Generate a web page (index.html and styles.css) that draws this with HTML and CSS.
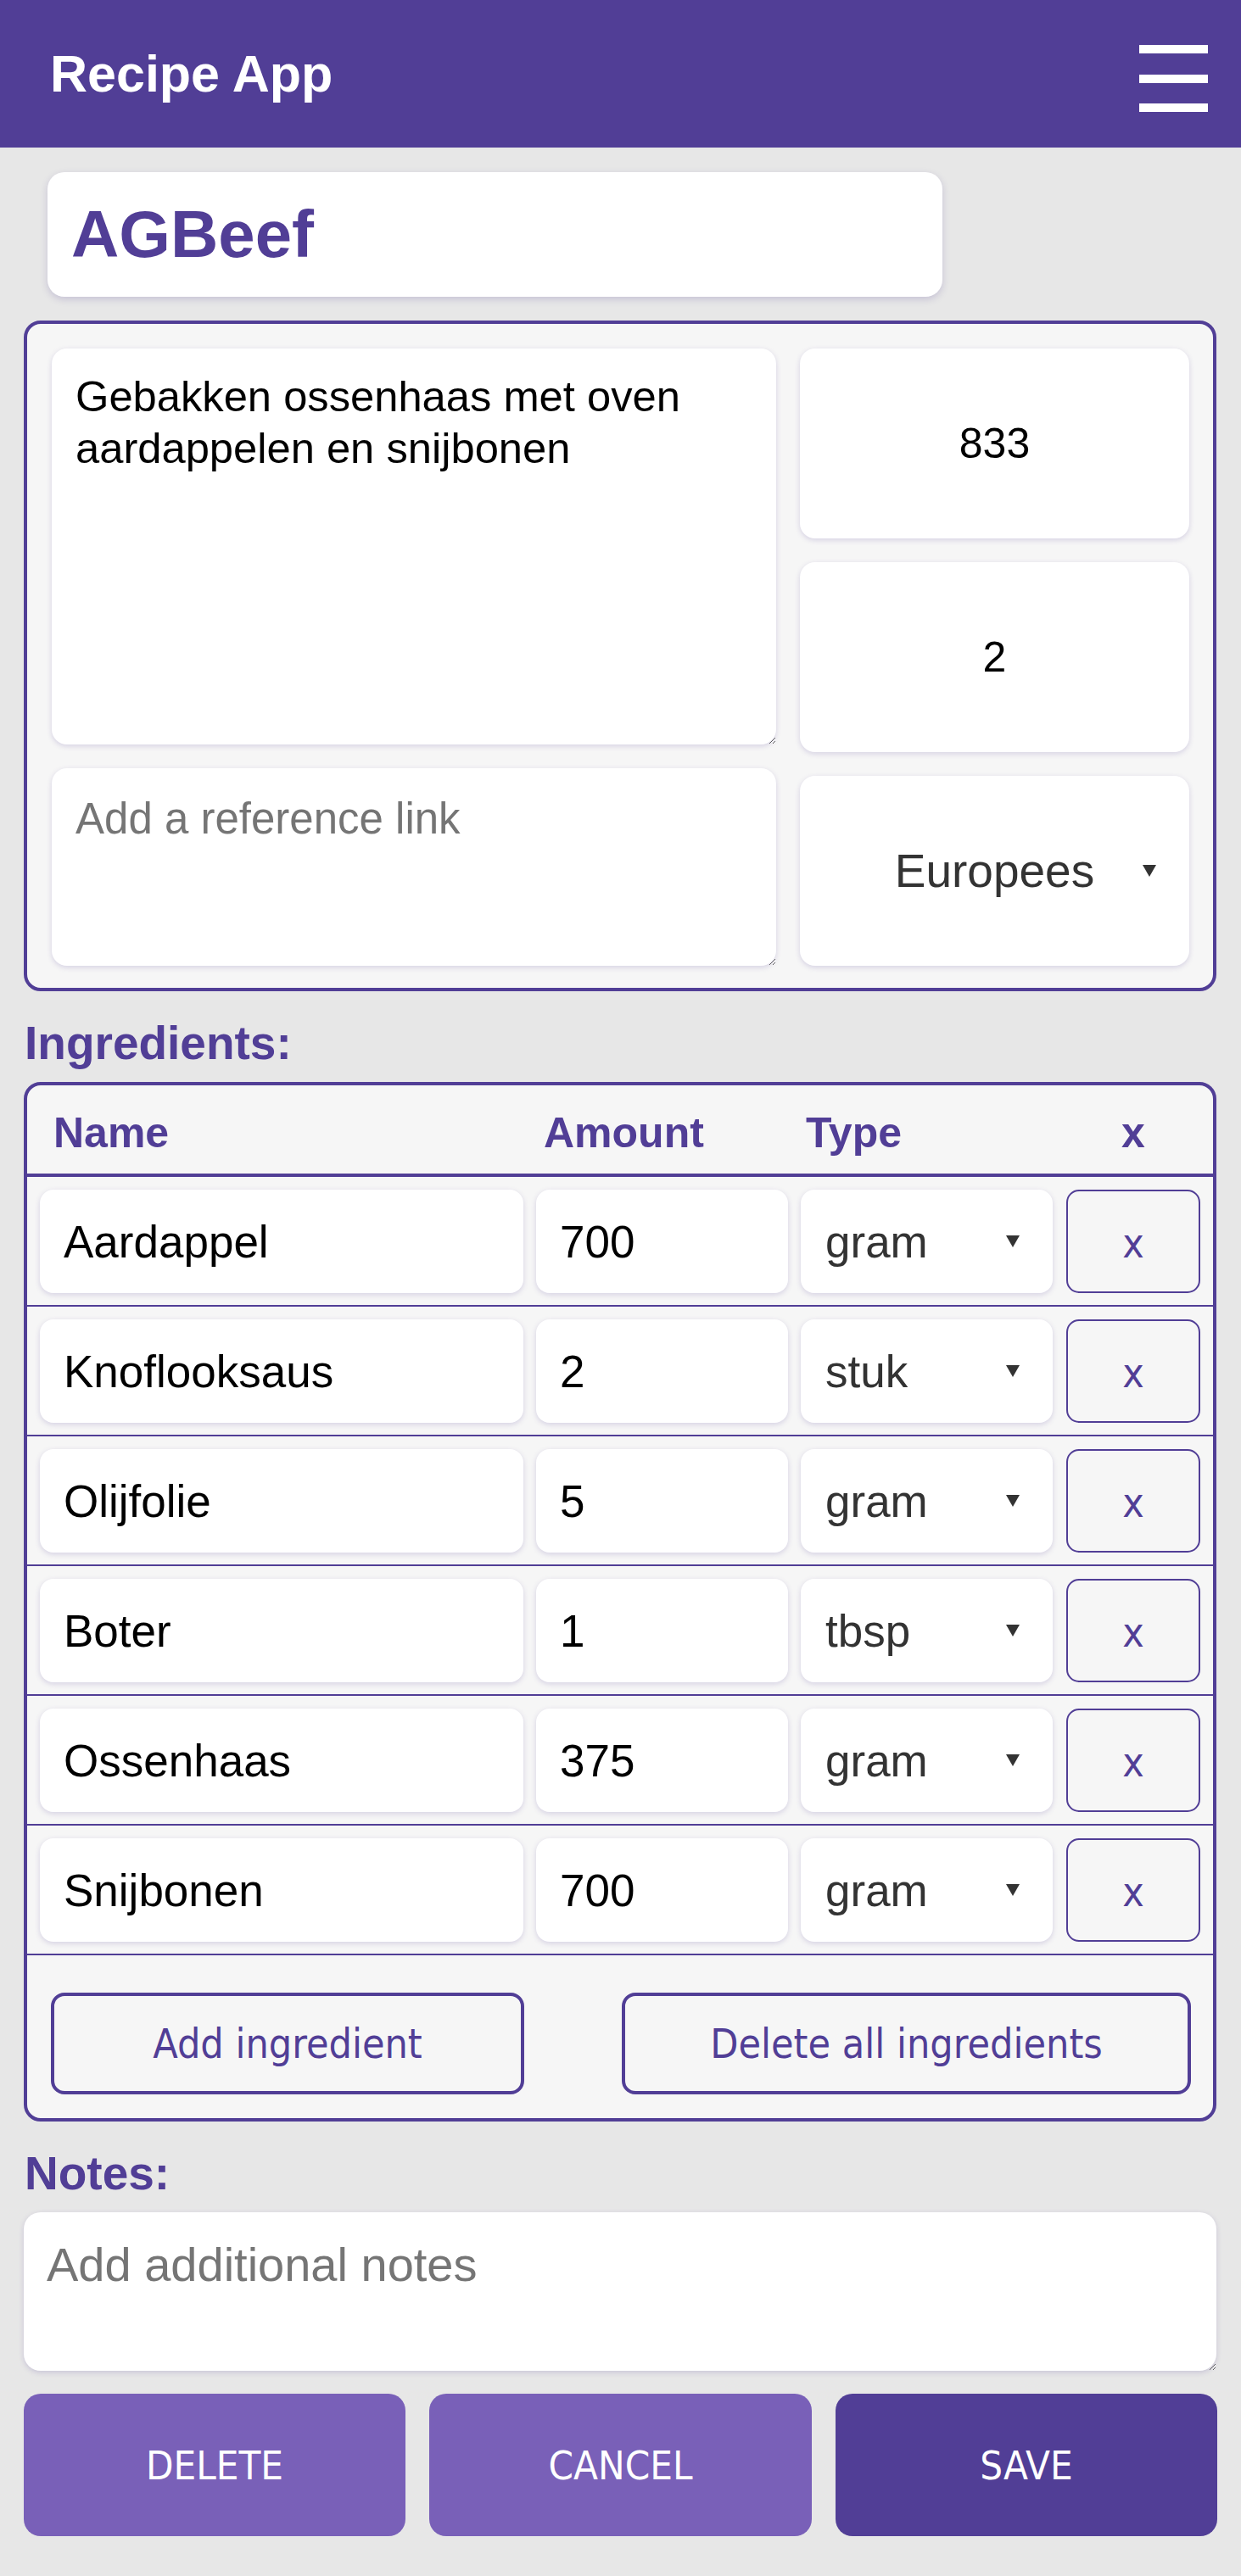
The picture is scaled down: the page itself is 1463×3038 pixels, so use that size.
FILE: index.html
```html
<!DOCTYPE html>
<html lang="nl">
<head>
<meta charset="utf-8">
<title>Recipe App</title>
<link rel="stylesheet" href="styles.css">
</head>
<body>
<header class="topbar">
  <h1 class="brand">Recipe App</h1>
  <button class="menu" aria-label="Menu"><span></span><span></span><span></span></button>
</header>
<main class="page">
  <div class="title-card">
    <input class="title-input" type="text" value="AGBeef">
  </div>

  <section class="details">
    <div class="col-left">
      <textarea class="field desc">Gebakken ossenhaas met oven aardappelen en snijbonen</textarea>
      <textarea class="field ref" placeholder="Add a reference link"></textarea>
    </div>
    <div class="col-right">
      <input class="field num" type="text" value="833">
      <input class="field num" type="text" value="2">
      <div class="select-wrap">
        <select class="field cuisine"><option>Europees</option></select>
      </div>
    </div>
  </section>

  <h2 class="label">Ingredients:</h2>
  <section class="ingredients">
    <div class="ing-head">
      <span class="h-name">Name</span>
      <span class="h-amount">Amount</span>
      <span class="h-type">Type</span>
      <span class="h-del">x</span>
    </div>
    <div class="ing-row">
      <input class="cell" type="text" value="Aardappel">
      <input class="cell" type="text" value="700">
      <div class="select-wrap"><select class="cell type"><option>gram</option></select></div>
      <button class="del">x</button>
    </div>
    <div class="ing-row">
      <input class="cell" type="text" value="Knoflooksaus">
      <input class="cell" type="text" value="2">
      <div class="select-wrap"><select class="cell type"><option>stuk</option></select></div>
      <button class="del">x</button>
    </div>
    <div class="ing-row">
      <input class="cell" type="text" value="Olijfolie">
      <input class="cell" type="text" value="5">
      <div class="select-wrap"><select class="cell type"><option>gram</option></select></div>
      <button class="del">x</button>
    </div>
    <div class="ing-row">
      <input class="cell" type="text" value="Boter">
      <input class="cell" type="text" value="1">
      <div class="select-wrap"><select class="cell type"><option>tbsp</option></select></div>
      <button class="del">x</button>
    </div>
    <div class="ing-row">
      <input class="cell" type="text" value="Ossenhaas">
      <input class="cell" type="text" value="375">
      <div class="select-wrap"><select class="cell type"><option>gram</option></select></div>
      <button class="del">x</button>
    </div>
    <div class="ing-row">
      <input class="cell" type="text" value="Snijbonen">
      <input class="cell" type="text" value="700">
      <div class="select-wrap"><select class="cell type"><option>gram</option></select></div>
      <button class="del">x</button>
    </div>
    <div class="ing-foot">
      <button class="outline add">Add ingredient</button>
      <button class="outline clear">Delete all ingredients</button>
    </div>
  </section>

  <h2 class="label">Notes:</h2>
  <textarea class="notes" placeholder="Add additional notes"></textarea>

  <div class="actions">
    <button class="btn light">DELETE</button>
    <button class="btn light">CANCEL</button>
    <button class="btn dark">SAVE</button>
  </div>
</main>
</body>
</html>
```

FILE: styles.css
```css
* { box-sizing: border-box; }

html { background: #e7e7e7; }

body {
  margin: 0;
  background: #e7e7e7;
  font-family: "Liberation Sans", Arial, sans-serif;
  color: #000;
}

.topbar {
  height: 174px;
  background: #513e96;
  display: flex;
  align-items: center;
  justify-content: space-between;
  padding: 0 39px 0 59px;
}

.brand {
  margin: 0;
  color: #fff;
  font-size: 61px;
  font-weight: bold;
  line-height: 1;
}

.menu {
  width: 81px;
  height: 79px;
  margin-top: 11px;
  padding: 0;
  border: 0;
  background: transparent;
  display: flex;
  flex-direction: column;
  justify-content: space-between;
}
.menu span {
  display: block;
  width: 81px;
  height: 10px;
  background: #fff;
}

.page {
  padding: 29px 29px 0 28px;
}

.title-card {
  margin-left: 28px;
  width: 1055px;
  height: 147px;
  background: #fff;
  border-radius: 20px;
  box-shadow: 0 3px 8px rgba(81, 62, 150, 0.22);
  display: flex;
  align-items: center;
}

.title-input {
  width: 100%;
  border: 0;
  outline: 0;
  background: transparent;
  padding: 0 28px;
  font-family: "Liberation Sans", Arial, sans-serif;
  font-weight: bold;
  font-size: 78px;
  color: #513e96;
}

.details {
  margin-top: 28px;
  border: 4px solid #513e96;
  border-radius: 20px;
  background: #f6f6f6;
  padding: 29px 28px 26px 29px;
  display: flex;
  gap: 28px;
}

.col-left {
  width: 854px;
  display: flex;
  flex-direction: column;
  gap: 28px;
}
.col-right {
  width: 459px;
  display: flex;
  flex-direction: column;
  gap: 28px;
}

.field {
  display: block;
  width: 100%;
  border: 0;
  outline: 0;
  background: #fff;
  border-radius: 18px;
  box-shadow: 0 2px 6px rgba(81, 62, 150, 0.2);
  font-family: "Liberation Sans", Arial, sans-serif;
  color: #000;
  margin: 0;
}

textarea::placeholder { color: #757575; opacity: 1; }

.desc {
  height: 467px;
  padding: 26px 28px;
  font-size: 50.7px;
  line-height: 61px;
  resize: vertical;
}

.ref {
  height: 233px;
  padding: 29px 28px;
  font-size: 51px;
  line-height: 61px;
  resize: vertical;
}

.num {
  height: 224px;
  text-align: center;
  font-size: 50px;
  padding: 0;
}

.select-wrap {
  position: relative;
}
.select-wrap::after {
  content: "";
  position: absolute;
  right: 39px;
  top: 50%;
  margin-top: -7px;
  width: 0;
  height: 0;
  border-left: 8px solid transparent;
  border-right: 8px solid transparent;
  border-top: 14px solid #333;
  pointer-events: none;
}

.cuisine {
  height: 224px;
  -webkit-appearance: none;
  appearance: none;
  font-size: 55px;
  color: #333;
  text-align: center;
  text-align-last: center;
  padding: 0 0 0 0;
}

.label {
  margin: 30px 0 14px 1px;
  font-size: 55px;
  line-height: 63px;
  font-weight: bold;
  color: #513e96;
}

.ingredients {
  border: 4px solid #513e96;
  border-radius: 20px;
  background: #f6f6f6;
}

.ing-head,
.ing-row {
  display: grid;
  grid-template-columns: 570px 297px 297px 159px;
  column-gap: 15px;
  padding: 0 15px;
}
.ing-head > :nth-child(4),
.ing-row > :nth-child(4) { margin-left: 1px; }

.ing-head {
  height: 108px;
  padding-top: 8px;
  align-items: center;
  border-bottom: 4px solid #513e96;
  font-size: 50px;
  font-weight: bold;
  color: #513e96;
}
.h-name { padding-left: 16px; }
.h-amount { padding-left: 9px; }
.h-type { padding-left: 6px; }
.h-del { text-align: center; }

.ing-row {
  padding-top: 15px;
  padding-bottom: 14px;
  border-bottom: 2px solid #513e96;
}

.cell {
  display: block;
  width: 100%;
  height: 122px;
  margin: 0;
  border: 0;
  outline: 0;
  background: #fff;
  border-radius: 16px;
  box-shadow: 0 2px 6px rgba(81, 62, 150, 0.2);
  padding: 0 28px;
  font-family: "Liberation Sans", Arial, sans-serif;
  font-size: 53px;
  color: #000;
}

.cell.type {
  -webkit-appearance: none;
  appearance: none;
  color: #333;
  padding: 0 60px 0 29px;
}

.del {
  height: 122px;
  margin: 0;
  border: 2px solid #513e96;
  border-radius: 15px;
  background: #f6f6f6;
  color: #513e96;
  font-family: "DejaVu Sans Condensed", "DejaVu Sans", Verdana, sans-serif;
  font-stretch: condensed;
  font-size: 48px;
  padding: 3px 0 0;
}

.ing-foot {
  display: flex;
  justify-content: space-between;
  padding: 44px 26px 28px 28px;
}

.outline {
  height: 120px;
  margin: 0;
  border: 4px solid #513e96;
  border-radius: 16px;
  background: #f6f6f6;
  color: #513e96;
  font-family: "DejaVu Sans Condensed", "DejaVu Sans", Verdana, sans-serif;
  font-stretch: condensed;
  font-size: 48px;
  padding: 0;
}
.outline.add { width: 558px; }
.outline.clear { width: 671px; }

.notes {
  display: block;
  width: 100%;
  height: 187px;
  margin: 0;
  border: 0;
  outline: 0;
  background: #fff;
  border-radius: 20px;
  box-shadow: 0 2px 6px rgba(81, 62, 150, 0.2);
  padding: 29px 27px;
  font-family: "Liberation Sans", Arial, sans-serif;
  font-size: 56px;
  resize: vertical;
}

.actions {
  margin-top: 27px;
  display: grid;
  grid-template-columns: 450px 451px 450px;
  column-gap: 28px;
}

.btn {
  height: 168px;
  margin: 0;
  border: 0;
  border-radius: 20px;
  color: #fff;
  font-family: "DejaVu Sans Condensed", "DejaVu Sans", Verdana, sans-serif;
  font-stretch: condensed;
  font-size: 47px;
  padding: 0;
}
.btn.light { background: #7960b8; }
.btn.dark { background: #513e96; }
```
